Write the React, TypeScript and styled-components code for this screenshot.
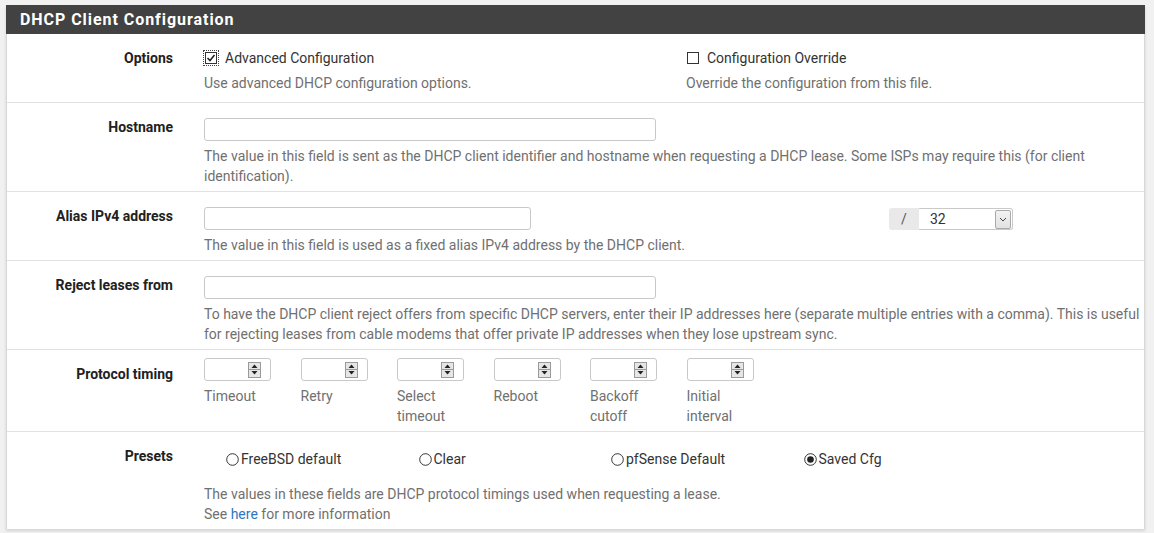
import React from "react";
import styled, { createGlobalStyle } from "styled-components";

const Global = createGlobalStyle`
  html, body { margin: 0; padding: 0; background: #f1f1f1; }
  body { font-family: Roboto, "Liberation Sans", sans-serif; font-size: 14px; color: #212121; }
  * { box-sizing: border-box; }
`;

const Page = styled.div`
  padding: 5px 9px 0 6px;
  width: 1154px;
  height: 533px;
  overflow: hidden;
`;

const Panel = styled.section`
  background: #fff;
  border-left: 1px solid #d8d8d8;
  border-right: 1px solid #d8d8d8;
  box-shadow: 0 2px 3px rgba(0, 0, 0, 0.12);
`;

const Header = styled.h2`
  margin: 0 -1px;
  height: 29px;
  background: #424242;
  color: #fff;
  font-size: 16px;
  font-weight: 700;
  letter-spacing: 0.95px;
  line-height: 29px;
  padding-left: 14px;
`;

const Row = styled.div<{ $pb?: number; $last?: boolean }>`
  display: grid;
  grid-template-columns: 197px 1fr;
  padding: 15px 0 ${(p) => p.$pb ?? 5}px;
  border-bottom: ${(p) => (p.$last ? "none" : "1px solid #e2e2e2")};
`;

const Label = styled.div`
  text-align: right;
  padding-right: 31px;
  font-weight: 700;
  font-size: 14px;
  line-height: 19px;
  color: #212121;
`;

const Content = styled.div<{ $mt?: number }>`
  margin-top: ${(p) => p.$mt ?? 0}px;
  min-width: 0;
`;

const Help = styled.div<{ $mt?: number }>`
  color: #707070;
  font-size: 14px;
  line-height: 20px;
  margin-top: ${(p) => p.$mt ?? 5}px;
`;

const Link = styled.a`
  color: #2f75c0;
  text-decoration: none;
`;

const TwoCols = styled.div`
  display: grid;
  grid-template-columns: 482px 1fr;
`;

const CheckLine = styled.label`
  display: flex;
  align-items: center;
  gap: 7px;
  line-height: 18px;
  font-size: 14px;
  color: #333;
  padding-left: 1px;
`;

const BoxWrap = styled.span<{ $focus?: boolean }>`
  display: inline-flex;
  width: 14px;
  height: 14px;
  align-items: center;
  justify-content: center;
  outline: ${(p) => (p.$focus ? "1px dotted #444" : "none")};
  margin-left: -1px;
`;

const TextInput = styled.div<{ $w: number }>`
  width: ${(p) => p.$w}px;
  height: 23px;
  border: 1px solid #c9c9c9;
  border-radius: 3px;
  background: #fff;
`;

const AliasLine = styled.div`
  display: flex;
  align-items: flex-start;
`;

const Spacer = styled.div`
  flex: 1;
`;

const InputGroup = styled.div`
  display: flex;
  margin-right: 131px;
  margin-top: 1px;
`;

const Addon = styled.div`
  width: 30px;
  height: 22px;
  background: #e9e9e9;
  color: #555;
  font-size: 14px;
  line-height: 22px;
  text-align: center;
  border-radius: 3px 0 0 3px;
`;

const Select = styled.div`
  width: 94px;
  height: 22px;
  border: 1px solid #c9c9c9;
  border-left: none;
  border-radius: 0 3px 3px 0;
  display: flex;
  align-items: center;
  padding-left: 11px;
  padding-right: 1px;
  font-size: 14px;
  color: #333;
`;

const SelectArrow = styled.div`
  margin-left: auto;
  width: 16px;
  height: 19px;
  border: 1px solid #a9a9a9;
  border-radius: 2px;
  background: linear-gradient(#f2f2f2, #e2e2e2);
  display: flex;
  align-items: center;
  justify-content: center;
`;

const TimingGrid = styled.div`
  display: grid;
  grid-template-columns: repeat(6, 96.5px);
`;

const TimingCol = styled.div`
  width: 67px;
`;

const SpinBox = styled.div`
  width: 67px;
  height: 23px;
  border: 1px solid #c9c9c9;
  border-radius: 3px;
  display: flex;
  align-items: center;
  justify-content: flex-end;
  padding-right: 9px;
`;

const Spin = styled.div`
  width: 13px;
  height: 16px;
  border: 1px solid #9a9a9a;
  background: #e6e6e6;
  display: flex;
  flex-direction: column;
`;

const SpinHalf = styled.div<{ $top?: boolean }>`
  flex: 1;
  display: flex;
  align-items: center;
  justify-content: center;
  border-bottom: ${(p) => (p.$top ? "1px solid #9a9a9a" : "none")};
`;

const TimingLabel = styled.div`
  color: #707070;
  font-size: 14px;
  line-height: 20px;
  margin-top: 5px;
`;

const RadioGrid = styled.div`
  display: grid;
  grid-template-columns: repeat(4, 192.5px);
  padding-left: 22px;
  line-height: 24px;
`;

const RadioLine = styled.label`
  display: flex;
  align-items: center;
  gap: 2px;
  color: #333;
  font-size: 14px;
`;

const Tri = ({ up }: { up?: boolean }) => (
  <svg width="7" height="4" viewBox="0 0 7 4">
    <path d={up ? "M0.5 4 L3.5 0.5 L6.5 4 Z" : "M0.5 0 L3.5 3.5 L6.5 0 Z"} fill="#222" />
  </svg>
);

const CheckBox = ({ checked }: { checked?: boolean }) => (
  <BoxWrap $focus={checked}>
    <svg width="12" height="12" viewBox="0 0 12 12">
      <rect x="0.5" y="0.5" width="11" height="11" fill="#fff" stroke="#333" />
      {checked && <path d="M2.5 6 L5 8.5 L9.5 3" fill="none" stroke="#222" strokeWidth="1.6" />}
    </svg>
  </BoxWrap>
);

const Radio = ({ checked }: { checked?: boolean }) => (
  <svg width="13" height="13" viewBox="0 0 13 13">
    <circle cx="6.5" cy="6.5" r="5.8" fill="#fff" stroke="#333" strokeWidth="1" />
    {checked && <circle cx="6.5" cy="6.5" r="3.3" fill="#222" />}
  </svg>
);

const SpinInput = () => (
  <SpinBox>
    <Spin>
      <SpinHalf $top>
        <Tri up />
      </SpinHalf>
      <SpinHalf>
        <Tri />
      </SpinHalf>
    </Spin>
  </SpinBox>
);

const timings = [
  ["Timeout"],
  ["Retry"],
  ["Select", "timeout"],
  ["Reboot"],
  ["Backoff", "cutoff"],
  ["Initial", "interval"],
];

const presets = [
  { label: "FreeBSD default", checked: false },
  { label: "Clear", checked: false },
  { label: "pfSense Default", checked: false },
  { label: "Saved Cfg", checked: true },
];

export default function App() {
  return (
    <>
      <Global />
      <Page>
        <Panel>
          <Header>DHCP Client Configuration</Header>

          <Row $pb={9}>
            <Label>Options</Label>
            <Content>
              <TwoCols>
                <div>
                  <CheckLine>
                    <CheckBox checked />
                    Advanced Configuration
                  </CheckLine>
                  <Help $mt={6}>Use advanced DHCP configuration options.</Help>
                </div>
                <div>
                  <CheckLine>
                    <CheckBox />
                    Configuration Override
                  </CheckLine>
                  <Help $mt={6}>Override the configuration from this file.</Help>
                </div>
              </TwoCols>
            </Content>
          </Row>

          <Row>
            <Label>Hostname</Label>
            <Content>
              <TextInput $w={452} />
              <Help>
                The value in this field is sent as the DHCP client identifier and hostname when requesting a DHCP
                lease. Some ISPs may require this (for client identification).
              </Help>
            </Content>
          </Row>

          <Row>
            <Label>Alias IPv4 address</Label>
            <Content>
              <AliasLine>
                <TextInput $w={327} />
                <Spacer />
                <InputGroup>
                  <Addon>/</Addon>
                  <Select>
                    32
                    <SelectArrow>
                      <svg width="8" height="5" viewBox="0 0 8 5">
                        <path d="M1 1 L4 4 L7 1" fill="none" stroke="#444" strokeWidth="1" />
                      </svg>
                    </SelectArrow>
                  </Select>
                </InputGroup>
              </AliasLine>
              <Help>The value in this field is used as a fixed alias IPv4 address by the DHCP client.</Help>
            </Content>
          </Row>

          <Row>
            <Label>Reject leases from</Label>
            <Content>
              <TextInput $w={452} />
              <Help>
                To have the DHCP client reject offers from specific DHCP servers, enter their IP addresses here
                (separate multiple entries with a comma). This is useful for rejecting leases from cable modems that
                offer private IP addresses when they lose upstream sync.
              </Help>
            </Content>
          </Row>

          <Row>
            <Label>Protocol timing</Label>
            <Content $mt={-7}>
              <TimingGrid>
                {timings.map((t) => (
                  <TimingCol key={t.join(" ")}>
                    <SpinInput />
                    <TimingLabel>
                      {t.map((w, i) => (
                        <div key={i}>{w}</div>
                      ))}
                    </TimingLabel>
                  </TimingCol>
                ))}
              </TimingGrid>
            </Content>
          </Row>

          <Row $pb={5} $last>
            <Label>Presets</Label>
            <Content>
              <RadioGrid>
                {presets.map((p) => (
                  <RadioLine key={p.label}>
                    <Radio checked={p.checked} />
                    {p.label}
                  </RadioLine>
                ))}
              </RadioGrid>
              <Help $mt={13}>
                The values in these fields are DHCP protocol timings used when requesting a lease.
                <br />
                See <Link href="#">here</Link> for more information
              </Help>
            </Content>
          </Row>
        </Panel>
      </Page>
    </>
  );
}
